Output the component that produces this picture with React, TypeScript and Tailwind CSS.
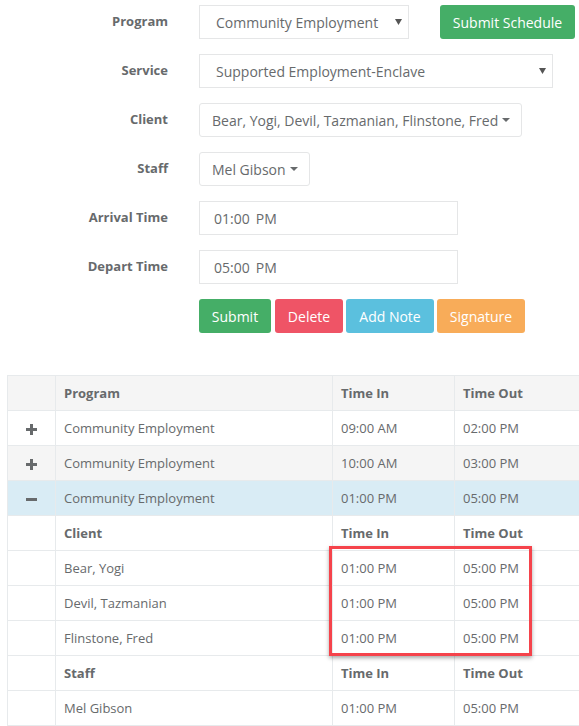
import React from "react";

const font = { fontFamily: '"Open Sans", "Liberation Sans", sans-serif' };

function Caret() {
  return (
    <span className="ml-[4px] inline-block h-0 w-0 border-x-[4px] border-t-[4px] border-x-transparent border-t-[#676a6c] align-middle" />
  );
}

function SelectArrow() {
  return (
    <svg width="7" height="6" viewBox="0 0 7 6" className="shrink-0">
      <path d="M0 0h7L3.5 6z" fill="#555" />
    </svg>
  );
}

function Plus() {
  return (
    <svg width="11" height="11" viewBox="0 0 11 11">
      <rect x="4" y="0" width="3" height="11" fill="#676a6c" />
      <rect x="0" y="4" width="11" height="3" fill="#676a6c" />
    </svg>
  );
}

function Minus() {
  return (
    <svg width="11" height="3" viewBox="0 0 11 3">
      <rect x="0" y="0" width="11" height="3" fill="#676a6c" />
    </svg>
  );
}

function Row({ label, children }: { label: string; children: React.ReactNode }) {
  return (
    <div className="mb-[15px] flex h-[34px] items-center">
      <div className="w-[168px] text-right text-[13px] font-bold text-[#676a6c]">{label}</div>
      <div className="ml-[31px] flex items-center">{children}</div>
    </div>
  );
}

const box =
  "flex h-[34px] items-center border border-[#e5e6e7] bg-white text-[14px] text-[#676a6c]";

const cell = "border border-[#e7eaec] px-[8px] pt-[2px] text-left";

type Line = { a: React.ReactNode; b: string; c: string; d: string; kind?: "sub" | "open" | "alt" };

const lines: Line[] = [
  { a: <Plus />, b: "Community Employment", c: "09:00 AM", d: "02:00 PM" },
  { a: <Plus />, b: "Community Employment", c: "10:00 AM", d: "03:00 PM", kind: "alt" },
  { a: <Minus />, b: "Community Employment", c: "01:00 PM", d: "05:00 PM", kind: "open" },
  { a: null, b: "Client", c: "Time In", d: "Time Out", kind: "sub" },
  { a: null, b: "Bear, Yogi", c: "01:00 PM", d: "05:00 PM" },
  { a: null, b: "Devil, Tazmanian", c: "01:00 PM", d: "05:00 PM" },
  { a: null, b: "Flinstone, Fred", c: "01:00 PM", d: "05:00 PM" },
  { a: null, b: "Staff", c: "Time In", d: "Time Out", kind: "sub" },
  { a: null, b: "Mel Gibson", c: "01:00 PM", d: "05:00 PM" },
];

export default function App() {
  return (
    <div className="relative h-[726px] w-[579px] overflow-hidden bg-white text-[#676a6c]" style={font}>
      <div className="pt-[5px]">
        <Row label="Program">
          <div className={`${box} w-[210px] justify-between pl-[16px] pr-[6px]`}>
            <span>Community Employment</span>
            <SelectArrow />
          </div>
          <button className="ml-[31px] h-[34px] w-[135px] rounded-[3px] bg-[#45ae67] text-[14px] text-white">
            Submit Schedule
          </button>
        </Row>
        <Row label="Service">
          <div className={`${box} w-[354px] justify-between pl-[16px] pr-[6px]`}>
            <span>Supported Employment-Enclave</span>
            <SelectArrow />
          </div>
        </Row>
        <Row label="Client">
          <div className={`${box} rounded-[3px] pl-[12px] pr-[11px]`}>
            Bear, Yogi, Devil, Tazmanian, Flinstone, Fred
            <Caret />
          </div>
        </Row>
        <Row label="Staff">
          <div className={`${box} rounded-[3px] pl-[12px] pr-[11px]`}>
            Mel Gibson
            <Caret />
          </div>
        </Row>
        <Row label="Arrival Time">
          <div className={`${box} w-[259px] pl-[14px]`}>
            01:00<span className="ml-[6px]">PM</span>
          </div>
        </Row>
        <Row label="Depart Time">
          <div className={`${box} w-[259px] pl-[14px]`}>
            05:00<span className="ml-[6px]">PM</span>
          </div>
        </Row>
        <div className="ml-[199px] flex">
          <button className="h-[34px] w-[72px] rounded-[3px] bg-[#45ae67] text-[14px] text-white">Submit</button>
          <button className="ml-[4px] h-[34px] w-[68px] rounded-[3px] bg-[#ef5466] text-[14px] text-white">Delete</button>
          <button className="ml-[3px] h-[34px] w-[88px] rounded-[3px] bg-[#5bc0de] text-[14px] text-white">Add Note</button>
          <button className="ml-[3px] h-[34px] w-[88px] rounded-[3px] bg-[#f8ac59] text-[14px] text-white">Signature</button>
        </div>
      </div>

      <div className="ml-[7px] mt-[42px] w-[600px]">
        <table className="w-[600px] table-fixed border-collapse text-[13px]">
          <colgroup>
            <col className="w-[48px]" />
            <col className="w-[277px]" />
            <col className="w-[122px]" />
            <col />
          </colgroup>
          <thead>
            <tr className="h-[35px] bg-[#f5f5f5] font-bold">
              <th className="border border-[#e7eaec]" />
              <th className={cell}>Program</th>
              <th className={cell}>Time In</th>
              <th className={cell}>Time Out</th>
            </tr>
          </thead>
          <tbody>
            {lines.map((l, i) => (
              <tr
                key={i}
                className={
                  "h-[35px] " +
                  (l.kind === "alt" ? "bg-[#f5f5f5] " : l.kind === "open" ? "bg-[#d9ecf5] " : "bg-white ") +
                  (l.kind === "sub" ? "font-bold" : "")
                }
              >
                <td className="border border-[#e7eaec] pt-[2px] text-center">
                  <div className="flex items-center justify-center">{l.a}</div>
                </td>
                <td className={cell}>{l.b}</td>
                <td className={cell}>{l.c}</td>
                <td className={cell}>{l.d}</td>
              </tr>
            ))}
          </tbody>
        </table>
      </div>

      <div className="absolute left-[329px] top-[546px] h-[110px] w-[203px] border-[3px] border-[#f5434b] shadow-[0_2px_4px_rgba(0,0,0,0.35)]" />
    </div>
  );
}
